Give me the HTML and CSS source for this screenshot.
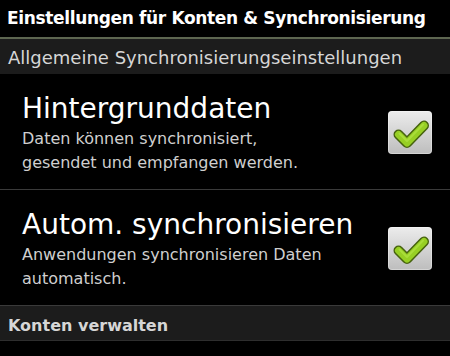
FILE: index.html
```html
<!DOCTYPE html>
<html lang="de">
<head>
    <meta charset="UTF-8">
    <meta name="viewport" content="width=device-width, initial-scale=1.0">
    <title>Konten &amp; Synchronisierung</title>
    <link rel="stylesheet" href="styles.css">
</head>
<body>
    <div class="screen">
        <div class="title-bar">Einstellungen für Konten &amp; Synchronisierung</div>

        <div class="section-header">Allgemeine Synchronisierungseinstellungen</div>

        <div class="pref-item">
            <div class="pref-text">
                <div class="pref-title">Hintergrunddaten</div>
                <div class="pref-summary">Daten können synchronisiert,<br>gesendet und empfangen werden.</div>
            </div>
            <div class="checkbox checked">
                <svg viewBox="0 0 44 43" width="44" height="43">
                    <path d="M10.5 23.5 L19 32 L36 14.5" fill="none" stroke="#46620e" stroke-width="10" stroke-linecap="round" stroke-linejoin="round"/>
                    <path d="M10.5 23.5 L19 32 L36 14.5" fill="none" stroke="#97cf24" stroke-width="7" stroke-linecap="round" stroke-linejoin="round"/>
                    <path d="M11.5 22.5 L19 30 L35 13.5" fill="none" stroke="#b6e64a" stroke-width="2" stroke-linecap="round" stroke-linejoin="round" opacity="0.6"/>
                </svg>
            </div>
        </div>

        <div class="pref-item">
            <div class="pref-text">
                <div class="pref-title">Autom. synchronisieren</div>
                <div class="pref-summary">Anwendungen synchronisieren Daten<br>automatisch.</div>
            </div>
            <div class="checkbox checked">
                <svg viewBox="0 0 44 43" width="44" height="43">
                    <path d="M10.5 23.5 L19 32 L36 14.5" fill="none" stroke="#46620e" stroke-width="10" stroke-linecap="round" stroke-linejoin="round"/>
                    <path d="M10.5 23.5 L19 32 L36 14.5" fill="none" stroke="#97cf24" stroke-width="7" stroke-linecap="round" stroke-linejoin="round"/>
                    <path d="M11.5 22.5 L19 30 L35 13.5" fill="none" stroke="#b6e64a" stroke-width="2" stroke-linecap="round" stroke-linejoin="round" opacity="0.6"/>
                </svg>
            </div>
        </div>

        <div class="section-header bold">Konten verwalten</div>
    </div>
</body>
</html>
```

FILE: styles.css
```css
* {
    margin: 0;
    padding: 0;
    box-sizing: border-box;
}

body {
    background: #000;
    font-family: "Comic Sans MS", "DejaVu Sans", sans-serif;
    color: #fff;
    width: 450px;
    height: 356px;
    overflow: hidden;
}

.title-bar {
    height: 39px;
    padding: 8px 0 0 7px;
    font-size: 17px;
    letter-spacing: -0.35px;
    font-weight: bold;
    border-bottom: 2px solid #5d6650;
    white-space: nowrap;
}

.section-header {
    height: 35px;
    background: #1c1c1c;
    color: #d6d6d6;
    font-size: 18px;
    padding: 8px 0 0 8px;
    white-space: nowrap;
}

.section-header.bold {
    font-size: 16px;
    font-weight: bold;
    padding-top: 10px;
    border-bottom: 1px solid #2e2e2e;
}

.pref-item {
    display: flex;
    align-items: flex-start;
    height: 116px;
    padding: 17px 18px 0 22px;
    border-bottom: 1px solid #3a3a3a;
}

.pref-item:last-of-type {
    border-bottom: none;
    height: 115px;
}

.pref-text {
    flex: 1;
}

.pref-title {
    font-size: 28px;
    line-height: 36px;
    color: #fff;
}

.pref-summary {
    font-size: 16px;
    line-height: 24px;
    color: #cfcfcf;
}

.checkbox {
    width: 44px;
    height: 43px;
    margin-top: 20px;
    border-radius: 4px;
    background: linear-gradient(#ececec, #bdbdbd);
    box-shadow: inset 0 0 0 1px rgba(255, 255, 255, 0.35);
}
```
